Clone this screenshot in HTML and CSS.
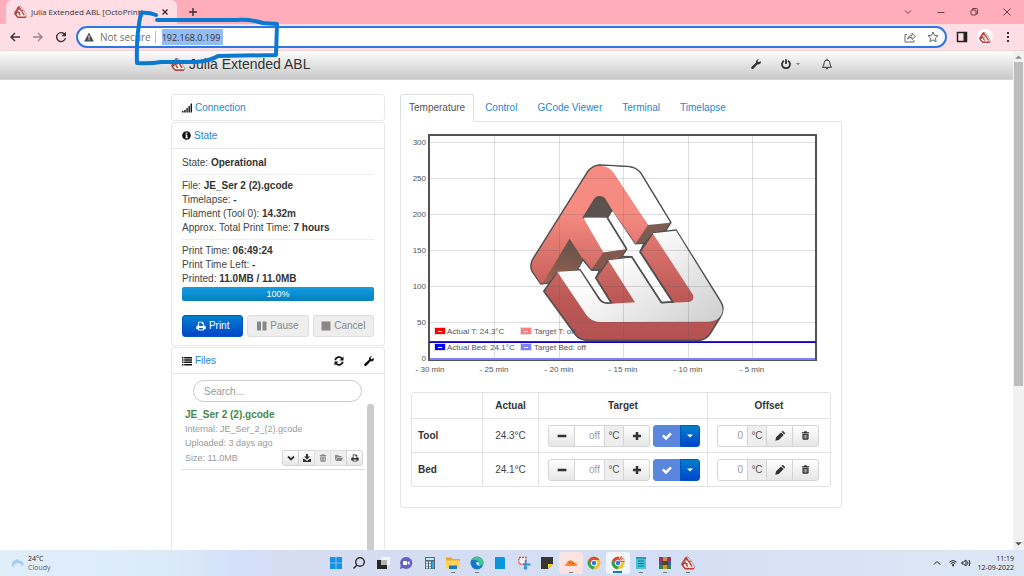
FILE: index.html
```html
<!DOCTYPE html>
<html lang="en">
<head>
<meta charset="utf-8">
<title>Julia Extended ABL [OctoPrint]</title>
<link rel="stylesheet" href="styles.css">
</head>
<body>
<svg class="sprite" aria-hidden="true">
  <defs>
    <linearGradient id="salmon" gradientUnits="userSpaceOnUse" x1="300" y1="60" x2="300" y2="416"><stop offset="0.4" stop-color="#f58b81"/><stop offset="1" stop-color="#c9615c"/></linearGradient>
    <linearGradient id="red" gradientUnits="userSpaceOnUse" x1="300" y1="264" x2="300" y2="585"><stop offset="0" stop-color="#e27870"/><stop offset="0.6" stop-color="#bc5957"/><stop offset="1" stop-color="#b45252"/></linearGradient>
    <linearGradient id="grey" gradientUnits="userSpaceOnUse" x1="440" y1="300" x2="620" y2="530"><stop offset="0" stop-color="#fbfbfb"/><stop offset="1" stop-color="#d2d2d2"/></linearGradient>
    <linearGradient id="brown" gradientUnits="userSpaceOnUse" x1="220" y1="281" x2="180" y2="416"><stop offset="0" stop-color="#615149"/><stop offset="1" stop-color="#98624f"/></linearGradient>
  </defs>
  <symbol id="logo" viewBox="88 54 586 536">
    <g stroke="#505050" stroke-width="5" stroke-linejoin="round">
      <path fill="#fff" d="M336 194L407 296L433 294L420 320L518 470L484 472L395 335L366 334L380 312L322 218Z"/>
      <path fill="#fff" d="M249 342L275 374L300 374L288 398L335 474L318 474Q302 470 296 458L240 374L230 376Z"/>
      <path fill="#fff" d="M300 60L385 65Q410 68 422 84L512 232L497 256L444 250Z"/>
      <path fill="url(#salmon)" d="M123 416L98 380Q88 362 99 342L262 82Q278 60 300 60L444 240L497 256L458 264L433 294L407 296L333 194L248 217L380 312L366 334L300 374L275 374L249 342L230 376L145 413Z"/>
      <path fill="url(#red)" d="M132 438L172 380L240 374L296 458Q305 474 322 474L335 474L288 398L325 345L395 335L484 472L518 470L420 320L458 264L528 255L660 466Q676 490 660 516L632 562Q618 585 595 585L265 585Q240 585 228 570Z"/>
    </g>
    <path fill="#fff" d="M300 62L385 67Q408 69 420 85L509 231L444 240L340 82Q325 62 300 62Z"/>
    <path fill="#fff" d="M250 218L322 218L378 312L310 322Z"/>
    <path fill="#fff" d="M338 198L405 298L430 297L418 320L514 468L486 470L397 333L369 333L383 312L325 218Z"/>
    <path fill="url(#salmon)" d="M123 414L100 380Q91 362 101 343L264 83Q280 62 300 62Q325 62 340 82L444 240L407 296L333 188L318 164Q312 153 299 153Q288 153 282 162L248 217L310 322L275 374L209 281L130 413Z"/>
    <path fill="#5c524d" d="M299 153Q312 153 318 164L336 194L322 218L248 217L282 162Q288 153 299 153Z"/>
    <path fill="#7c5c50" d="M444 240L510 233L496 254L458 263L433 293L407 295Z"/>
    <path fill="#83594d" d="M310 322L378 313L365 333L325 344L300 373L275 373Z"/>
    <path fill="url(#brown)" d="M209 281L249 342L230 375L172 379L145 412L128 415Z"/>
    <path fill="url(#grey)" d="M172 380L240 376L294 460Q303 476 322 476L405 471L325 345L395 337L483 474L565 470Q585 466 578 448L458 264L528 257L657 466Q678 498 655 519Q643 529 620 529L300 530Q275 530 260 510Z"/>
    <path fill="none" stroke="#505050" stroke-width="5" d="M322 218L380 312M484 472L395 335L366 334M484 472L518 470L420 320L433 294M336 194L322 218"/>
  </symbol>
  <symbol id="logo-mini" viewBox="88 54 586 536">
    <path fill="#fff" stroke="#7a4a48" stroke-width="24" d="M300 66L385 70L512 232L528 255L660 480L600 575L260 575L132 438L172 380L105 370Z"/>
    <path fill="#d2403a" d="M125 430L92 370L270 70L330 66L444 240L407 310L299 150L248 217L310 322L275 384L209 281Z"/>
    <path fill="#6a3530" d="M299 140L340 194L322 218L248 217ZM209 281L249 342L230 376L125 430ZM444 240L512 232L490 265L407 310ZM310 322L380 312L366 340L275 384Z"/>
    <path fill="#c83530" d="M132 438L172 380L270 520L660 520L610 588L250 588ZM325 345L405 470L335 478L280 398ZM458 264L585 465L518 475L420 320Z"/>
  </symbol>
  <symbol id="wrench" viewBox="0 0 16 16"><path d="M15.300 3.300L12.500 5 10.700 3.900V1.800L13.300.4C10.700-.4 8 1.500 8 4.300c0 .5.1 1 .2 1.400L1 12.500c-1 1-.9 2.200-.1 3s2 .7 2.900-.1L10.600 8.400c.4.1.9.2 1.300.2 2.700 0 4.700-2.600 3.400-5.300z"/></symbol>
  <symbol id="trash" viewBox="0 0 16 16"><path fill-rule="evenodd" d="M5 2L6 .5h4L11 2h3.500v2h-13V2zM2.500 5h11v9l-1.300 1.500H3.800L2.500 14zM5 6.500v7h1v-7zm2.500 0v7h1v-7zm2.500 0v7h1v-7z"/></symbol>
  <symbol id="print" viewBox="0 0 16 16"><path fill-rule="evenodd" d="M3.500 1h7l2 2v4h1q2 0 2 2v4h-3v2h-9v-2h-3V9q0-2 2-2h1zM5 2.500V8h6V4.500H9v-2zM5 11v2.500h6V11z"/></symbol>
  <symbol id="pencil" viewBox="0 0 16 16"><path d="M.5 15.500l1.200-5.500L9.500 2.200l4.300 4.300L6 14.300zM10.500 1.300L12 0h1l3 3v1l-1.300 1.500z"/></symbol>
  <symbol id="minus" viewBox="0 0 16 16"><path d="M1 6h14v4H1z"/></symbol>
  <symbol id="plus" viewBox="0 0 16 16"><path d="M6 1.500h4V6h4.500v4H10v4.500H6V10H1.500V6H6z"/></symbol>
  <symbol id="check" viewBox="0 0 16 16"><path d="M0 8.500L2.800 5.700l3.500 3.500 6.500-6.700L15.800 5.300 6.400 14.800z"/></symbol>
  <symbol id="caret" viewBox="0 0 16 16"><path d="M2 5h12l-6 6z"/></symbol>
</svg>

<header class="browser">
  <div class="tabstrip">
    <div class="tab">
      <svg class="tab-logo"><use href="#logo-mini"/></svg>
      <span class="tab-title">Julia Extended ABL [OctoPrint]</span>
      <button class="bare" aria-label="Close tab"><svg class="i8" viewBox="0 0 8 8"><path class="line bold" d="M1.500 1.500l5 5m0-5l-5 5"/></svg></button>
    </div>
    <button class="bare newtab" aria-label="New tab"><svg class="i10" viewBox="0 0 10 10"><path class="line bold" d="M5 1v8M1 5h8"/></svg></button>
    <div class="winbtns">
      <button class="bare" aria-label="Search tabs"><svg class="i10" viewBox="0 0 10 10"><path class="line" d="M2 3.500l3 3 3-3"/></svg></button>
      <button class="bare" aria-label="Minimize"><svg class="i10" viewBox="0 0 10 10"><path class="line" d="M1.500 5.500h7"/></svg></button>
      <button class="bare" aria-label="Restore"><svg class="i10" viewBox="0 0 10 10"><path class="line" d="M2 4q0-1 1-1h3q1 0 1 1v3q0 1-1 1H3q-1 0-1-1zM3.500 3V1.500H7.500q1 0 1 1V7H7"/></svg></button>
      <button class="bare" aria-label="Close"><svg class="i10" viewBox="0 0 10 10"><path class="line" d="M1.500 1.500l7 7m0-7l-7 7"/></svg></button>
    </div>
  </div>
  <div class="toolbar">
    <div class="history">
      <button class="bare" aria-label="Back"><svg class="i12" viewBox="0 0 12 12"><path class="line bold" d="M11 6H2M6 2L2 6l4 4"/></svg></button>
      <button class="bare faded" aria-label="Forward"><svg class="i12" viewBox="0 0 12 12"><path class="line bold" d="M1 6h9M6 2l4 4-4 4"/></svg></button>
      <button class="bare" aria-label="Reload"><svg class="i12" viewBox="0 0 12 12"><path class="line bold" d="M9.800 3.500A4.500 4.500 0 1 0 10.500 7.200"/><path d="M11 .8v4.400H6.600z"/></svg></button>
    </div>
    <div class="omnibox">
      <svg class="i10" viewBox="0 0 10 10"><path fill="#4c4c50" d="M5 .5L9.800 9.500H.2z"/><path fill="#fff" d="M4.500 3.500h1v3h-1zm0 3.800h1v1h-1z"/></svg>
      <span class="insecure">Not secure</span>
      <input class="url" aria-label="Address" value="192.168.0.199">
      <button class="bare share" aria-label="Share"><svg class="i12" viewBox="0 0 12 12"><path class="line" d="M3 3.500H1v7.500h9V9M3.500 8q.5-3.500 4.500-3.500V2.200L11.500 5.500 8 8.500V6.500Q5 6.300 3.500 8z"/></svg></button>
      <button class="bare" aria-label="Bookmark"><svg class="i12" viewBox="0 0 12 12"><path class="line" d="M6 1l1.500 3.300 3.500.4-2.600 2.400.7 3.600L6 8.900l-3.100 1.800.7-3.600L1 4.700l3.500-.4z"/></svg></button>
    </div>
    <button class="bare" aria-label="Side panel"><svg class="i12" viewBox="0 0 12 12"><path fill="none" stroke="#222" stroke-width="1.500" d="M1.500 1.500h9v9h-9z"/><path fill="#222" d="M7.500 1.500h3v9h-3z"/></svg></button>
    <button class="bare avatar" aria-label="Profile"><svg><use href="#logo-mini"/></svg></button>
    <button class="bare" aria-label="Menu"><svg class="i12" viewBox="0 0 12 12"><path d="M5 1h2v2H5zm0 4h2v2H5zm0 4h2v2H5z"/></svg></button>
  </div>
</header>

<div class="viewport">
  <div class="page">
    <nav class="navbar">
      <div class="wrap nav-inner">
        <a class="brand" href="#"><svg><use href="#logo-mini"/></svg>Julia Extended ABL</a>
        <a class="nav-icon" href="#" aria-label="Settings"><svg class="i10"><use href="#wrench"/></svg></a>
        <a class="nav-icon power" href="#" aria-label="System"><svg class="i10" viewBox="0 0 10 10"><path class="line heavy" d="M3 1.800a4 4 0 1 0 4 0M5 .3v4.700"/></svg><svg class="i6"><use href="#caret"/></svg></a>
        <a class="nav-icon" href="#" aria-label="Notifications"><svg class="i12" viewBox="0 0 12 12"><path class="line" d="M1.500 9.300Q3.200 7.500 3.200 4.500 3.500 2 6 2t2.800 2.500q0 3 1.700 4.800zM5 10.300q1 1.400 2 0M6 .8V2"/></svg></a>
      </div>
    </nav>

    <div class="wrap columns">
      <aside>
        <section class="box">
          <h2><svg class="i10" viewBox="0 0 10 10"><path d="M0 8h1.500v1.500H0zm2.200-1h1.500v2.500H2.200zm2.200-2h1.400v4.500H4.400zM6.500 3h1.400v6.500H6.500zM8.600.5H10v9H8.600z"/></svg><a href="#">Connection</a></h2>
        </section>
        <section class="box">
          <h2><svg class="i9" viewBox="0 0 9 9"><circle cx="4.500" cy="4.500" r="4.300"/><path fill="#fff" d="M3.700 1.400h1.700v1.400H3.700zM3.200 3.500h2.200v3H6v.8H3.200v-.8h.6V4.300h-.6z"/></svg><a href="#">State</a></h2>
          <div class="state">
            <p>State: <b>Operational</b></p>
            <hr>
            <p>File: <b>JE_Ser 2 (2).gcode</b></p>
            <p>Timelapse: <b>-</b></p>
            <p>Filament (Tool 0): <b>14.32m</b></p>
            <p>Approx. Total Print Time: <b>7 hours</b></p>
            <hr>
            <p>Print Time: <b>06:49:24</b></p>
            <p>Print Time Left: <b>-</b></p>
            <p>Printed: <b>11.0MB / 11.0MB</b></p>
            <div class="progress">100%</div>
            <div class="job">
              <button class="btn primary"><svg class="i10"><use href="#print"/></svg>Print</button>
              <button class="btn" disabled><svg class="i10" viewBox="0 0 10 10"><path d="M0 .5h4v9H0zm5.500 0h4v9h-4z"/></svg>Pause</button>
              <button class="btn" disabled><svg class="i10" viewBox="0 0 10 10"><path d="M.5.500h9v9h-9z"/></svg>Cancel</button>
            </div>
          </div>
        </section>
        <section class="box">
          <h2><svg class="i10" viewBox="0 0 10 10"><path d="M0 1h1.500v1.500H0zm2.200 0H10v1.500H2.200zM0 3.300h1.500v1.500H0zm2.200 0H10v1.500H2.200zM0 5.600h1.500v1.500H0zm2.200 0H10v1.500H2.200zM0 7.900h1.500v1.500H0zm2.200 0H10v1.500H2.200z"/></svg><a href="#">Files</a>
            <button class="bare refresh" aria-label="Refresh"><svg class="i10" viewBox="0 0 10 10"><path class="line heavy" d="M1.200 4.200A3.900 3.900 0 0 1 8 2.500M8.800 5.800A3.900 3.900 0 0 1 2 7.500"/><path d="M9.500.5v4h-4zM.5 9.500v-4h4z"/></svg></button>
            <button class="bare" aria-label="File settings"><svg class="i10"><use href="#wrench"/></svg></button>
          </h2>
          <div class="files">
            <input class="search" type="search" placeholder="Search..." aria-label="Search files">
            <div class="filelist">
              <div class="entries">
                <article class="entry">
                  <h3>JE_Ser 2 (2).gcode</h3>
                  <p>Internal: JE_Ser_2_(2).gcode</p>
                  <p>Uploaded: 3 days ago</p>
                  <div class="entry-foot">
                    <p>Size: 11.0MB</p>
                    <div class="group">
                      <button class="btn" aria-label="More"><svg class="i8" viewBox="0 0 8 8"><path class="line heavy" d="M1 2.500l3 3 3-3"/></svg></button>
                      <button class="btn" aria-label="Download"><svg class="i8" viewBox="0 0 8 8"><path d="M3 0h2v2.500h2L4 5.500 1 2.500h2zM0 5h1.500L4 7l2.500-2H8v3H0z"/></svg></button>
                      <button class="btn" disabled aria-label="Delete"><svg class="i8"><use href="#trash"/></svg></button>
                      <button class="btn" disabled aria-label="Load"><svg class="i8" viewBox="0 0 8 8"><path d="M0 1h3l1 1h2.500v1.200H2L0 6.500zM2.300 3.800H8L6.500 7H.5z"/></svg></button>
                      <button class="btn" aria-label="Print file"><svg class="i8"><use href="#print"/></svg></button>
                    </div>
                  </div>
                </article>
              </div>
              <div class="list-scroll"></div>
            </div>
          </div>
        </section>
      </aside>

      <main>
        <ul class="tabs">
          <li class="active"><a href="#">Temperature</a></li>
          <li><a href="#">Control</a></li>
          <li><a href="#">GCode Viewer</a></li>
          <li><a href="#">Terminal</a></li>
          <li><a href="#">Timelapse</a></li>
        </ul>
        <div class="pane">
          <svg class="chart" viewBox="0 0 420 245" role="img" aria-label="Temperature graph">
            <use href="#logo" x="118" y="31" width="196" height="179"/>
            <path stroke="#545454" stroke-opacity=".2" fill="none" d="M19 10.500H405M19 46.500H405M19 82.500H405M19 118.500H405M19 154.500H405M19 190.500H405M83.500 3V227M148.500 3V227M212.500 3V227M277.500 3V227M341.500 3V227"/>
            <g class="axis">
              <text x="15" y="13" text-anchor="end">300</text><text x="15" y="49" text-anchor="end">250</text><text x="15" y="85" text-anchor="end">200</text><text x="15" y="121" text-anchor="end">150</text><text x="15" y="157" text-anchor="end">100</text><text x="15" y="193" text-anchor="end">50</text><text x="15" y="229" text-anchor="end">0</text>
              <text x="19" y="240" text-anchor="middle">- 30 min</text><text x="83" y="240" text-anchor="middle">- 25 min</text><text x="148" y="240" text-anchor="middle">- 20 min</text><text x="212" y="240" text-anchor="middle">- 15 min</text><text x="277" y="240" text-anchor="middle">- 10 min</text><text x="341" y="240" text-anchor="middle">- 5 min</text>
              <text x="36" y="202">Actual T: 24.3°C</text><text x="123" y="202">Target T: off</text>
              <text x="36" y="218">Actual Bed: 24.1°C</text><text x="123" y="218">Target Bed: off</text>
            </g>
            <g stroke="#ddd">
              <path fill="#f00" d="M23.500 195.500h11v7h-11z"/><path fill="#ff8080" d="M109.500 195.500h11v7h-11z"/>
              <path fill="#00f" d="M23.500 211.500h11v7h-11z"/><path fill="#8080ff" d="M109.500 211.500h11v7h-11z"/>
              <path stroke="#fff" d="M27 199.500h4M113 199.500h4M27 215.500h4M113 215.500h4"/>
            </g>
            <path fill="none" stroke="#545454" stroke-width="2" d="M18 3H405V228H18z"/>
            <path stroke="#8080ff" stroke-width="2" d="M19 227H404"/>
            <path stroke="#b0003c" d="M18 209.500H405"/><path stroke="#1000c8" d="M18 210.500H405"/>
          </svg>
          <table>
            <colgroup><col class="c-name"><col class="c-actual"><col class="c-target"><col></colgroup>
            <thead><tr><th></th><th>Actual</th><th>Target</th><th>Offset</th></tr></thead>
            <tbody>
              <tr>
                <th>Tool</th><td class="actual">24.3°C</td>
                <td><div class="controls">
                  <div class="group"><button class="btn" aria-label="Decrease tool"><svg class="i10"><use href="#minus"/></svg></button><input placeholder="off" aria-label="Tool target"><span class="unit">°C</span><button class="btn" aria-label="Increase tool"><svg class="i10"><use href="#plus"/></svg></button></div>
                  <div class="group"><button class="btn primary set" aria-label="Set tool"><svg class="i10"><use href="#check"/></svg></button><button class="btn primary drop" aria-label="Tool presets"><svg class="i8"><use href="#caret"/></svg></button></div>
                </div></td>
                <td><div class="controls"><div class="group"><input placeholder="0" aria-label="Tool offset"><span class="unit">°C</span><button class="btn" aria-label="Edit tool offset"><svg class="i10"><use href="#pencil"/></svg></button><button class="btn" aria-label="Clear tool offset"><svg class="i9"><use href="#trash"/></svg></button></div></div></td>
              </tr>
              <tr>
                <th>Bed</th><td class="actual">24.1°C</td>
                <td><div class="controls">
                  <div class="group"><button class="btn" aria-label="Decrease bed"><svg class="i10"><use href="#minus"/></svg></button><input placeholder="off" aria-label="Bed target"><span class="unit">°C</span><button class="btn" aria-label="Increase bed"><svg class="i10"><use href="#plus"/></svg></button></div>
                  <div class="group"><button class="btn primary set" aria-label="Set bed"><svg class="i10"><use href="#check"/></svg></button><button class="btn primary drop" aria-label="Bed presets"><svg class="i8"><use href="#caret"/></svg></button></div>
                </div></td>
                <td><div class="controls"><div class="group"><input placeholder="0" aria-label="Bed offset"><span class="unit">°C</span><button class="btn" aria-label="Edit bed offset"><svg class="i10"><use href="#pencil"/></svg></button><button class="btn" aria-label="Clear bed offset"><svg class="i9"><use href="#trash"/></svg></button></div></div></td>
              </tr>
            </tbody>
          </table>
        </div>
      </main>
    </div>
  </div>
  <div class="scrollbar"><svg viewBox="0 0 10 10"><path fill="#8a8a8a" d="M2 7l3-3 3 3z"/></svg><div class="thumb"></div><svg viewBox="0 0 10 10"><path fill="#505050" d="M2 3l3 3 3-3z"/></svg></div>
</div>

<footer class="taskbar">
  <div class="weather">
    <svg viewBox="0 0 14 10"><path fill="#a9c8ee" d="M3 9a3 3 0 0 1 0-5 4 4 0 0 1 7-1 3 3 0 0 1 1 6z"/><path fill="#dceafa" d="M4 9a2 2 0 0 1 1-3 3 3 0 0 1 5 0 2 2 0 0 1 2 3z"/></svg>
    <div><p>24°C</p><p class="dim">Cloudy</p></div>
  </div>
  <div class="apps">
    <button class="bare" aria-label="Start"><svg viewBox="0 0 14 14"><path fill="#1592e6" d="M1 1h5.700v5.700H1zm6.300 0H13v5.700H7.300zM1 7.300h5.700V13H1zm6.300 0H13V13H7.300z"/></svg></button>
    <button class="bare" aria-label="Search"><svg viewBox="0 0 14 14"><circle cx="8" cy="6" r="4.300" fill="none" stroke="#333" stroke-width="1.500"/><path stroke="#333" stroke-width="1.600" d="M5 9L1.500 12.500"/></svg></button>
    <button class="bare" aria-label="Task view"><svg viewBox="0 0 14 14"><path fill="#272727" d="M1 4h10v9H1z"/><path fill="#f4f4f4" d="M5 1h9v8H5z"/><path fill="#b5b5b5" d="M5 4h6v5H5z"/></svg></button>
    <button class="bare" aria-label="Chat"><svg viewBox="0 0 14 14"><path fill="#6261c8" d="M7 1a6 6 0 1 1-3 11L1 13l.7-3.500A6 6 0 0 1 7 1z"/><path fill="#fff" d="M4 5h4v4H4zm4.500 1.500L10.500 5v4l-2-1.500z"/></svg></button>
    <button class="bare" aria-label="Calculator"><svg viewBox="0 0 14 14"><path fill="#586a7a" d="M2 1h10v12H2z"/><path fill="#c3e6f7" d="M3 2h8v2H3zM3 5.500h2v2H3zm3 0h2v2H6zM3 8h2v2H3zm3 0h2v2H6zm-3 2.500h2v2H3zm3 0h2v2H6z"/><path fill="#35a7df" d="M9 5.500h2v7H9z"/></svg></button>
    <button class="bare run" aria-label="Explorer"><svg viewBox="0 0 14 14"><path fill="#e8a820" d="M0 1.500h5.500l1 1.500H14V6H0z"/><path fill="#ffd35b" d="M0 4.500h14V12.500H0z"/><path fill="#1878c8" d="M3 9.500h8V13H3z"/></svg></button>
    <button class="bare run" aria-label="Edge"><svg viewBox="0 0 14 14"><circle cx="7" cy="7" r="6.500" fill="#1278c8"/><path fill="#42c88a" d="M1.500 4a6.500 6.500 0 0 1 12 4q-1 2-5 1.200Q10 6 7 4.500 4 3.500 1.500 4z"/><path fill="#dff4ff" d="M6 7q1-2 3 0-1 1.500 1 2.700-3 .8-4-2.700z"/></svg></button>
    <button class="bare" aria-label="Notebook"><svg viewBox="0 0 14 14"><path fill="#0a95dc" d="M2 1h9l1 1v11H2z"/></svg></button>
    <button class="bare" aria-label="Snip"><svg viewBox="0 0 14 14"><path fill="#fff" stroke="#d9482f" stroke-width="1.300" stroke-dasharray="2 1" d="M2 1.500h7v6.500H2z"/><path fill="none" stroke="#3290d4" stroke-width="1.800" d="M8.500 4v8M6 8.500h7.500"/><circle cx="8.500" cy="12" r="1.800" fill="#3290d4"/></svg></button>
    <button class="bare" aria-label="Sticky notes"><svg viewBox="0 0 14 14"><path fill="#363636" d="M1 1h12v7l-5 5H1z"/><path fill="#ffd22e" d="M8 13V8h5z"/></svg></button>
    <button class="bare run pink" aria-label="Slicer"><svg viewBox="0 0 14 14"><path fill="#f58a20" d="M0 9q3-1 4-4 4-2 7 2l3 2-3 1H3z"/><path fill="#c64e20" d="M5 6h2v1H5zm3 1h2v1H8z"/></svg></button>
    <button class="bare" aria-label="Chrome"><svg viewBox="0 0 14 14"><circle cx="7" cy="7" r="6.500" fill="#f6c425"/><path fill="#df4637" d="M1.400 4a6.500 6.500 0 0 1 11.200 0H7L4 8z"/><path fill="#30a352" d="M1.400 4L5 9l3 1-2 3.400A6.500 6.500 0 0 1 1.400 4z"/><circle cx="7" cy="7" r="2.800" fill="#3478df" stroke="#fff"/></svg></button>
    <button class="bare run current" aria-label="Chrome window"><svg viewBox="0 0 14 14"><circle cx="7" cy="7" r="6.500" fill="#f6c425"/><path fill="#df4637" d="M1.400 4a6.500 6.500 0 0 1 11.200 0H7L4 8z"/><path fill="#30a352" d="M1.400 4L5 9l3 1-2 3.400A6.500 6.500 0 0 1 1.400 4z"/><circle cx="7" cy="7" r="2.800" fill="#3478df" stroke="#fff"/><circle cx="11" cy="3" r="3" fill="#eee"/><use href="#logo-mini" x="8" y="0" width="6" height="6"/></svg></button>
    <button class="bare run" aria-label="Notepad"><svg viewBox="0 0 14 14"><path fill="#46c2d9" d="M2 1h10v12H2z"/><path stroke="#16738d" d="M2 2h10M4 5h6M4 7.500h6M4 10h6"/></svg></button>
    <button class="bare run" aria-label="WinRAR"><svg viewBox="0 0 14 14"><path fill="#9c3060" d="M1 1h12v4H1z"/><path fill="#315cb0" d="M1 5h12v4H1z"/><path fill="#368541" d="M1 9h12v4H1z"/><path fill="#c99638" d="M5 1h4v12H5z"/><path fill="#653d19" d="M4 5h6v4H4z"/></svg></button>
    <button class="bare run" aria-label="Julia"><svg><use href="#logo-mini"/></svg></button>
  </div>
  <div class="tray">
    <svg class="i8" viewBox="0 0 8 8"><path class="line" d="M1 5.500l3-3 3 3"/></svg>
    <svg class="i8 wifi" viewBox="0 0 8 8"><path class="line" d="M.5 3q3.500-3 7 0M1.700 4.500q2.300-2 4.600 0M3 6q1-1 2 0"/><circle cx="4" cy="6.800" r=".8"/></svg>
    <svg class="i10" viewBox="0 0 10 10"><path class="line" d="M1 4h1.500L5 2v6L2.500 6H1zM6.500 3.500q1 1.500 0 3M8 2q2 3 0 6"/></svg>
    <div class="clock"><p>11:19</p><p>12-09-2022</p></div>
  </div>
</footer>

<svg class="scribble" viewBox="0 0 150 60" aria-hidden="true"><path d="M26 9Q18 6 11 7Q6 30 7 57Q20 58 31 56L66 56Q80 55 88 50L146 49L147 18L133 17Q120 13 106 14L27 14"/></svg>
</body>
</html>
```
FILE: styles.css
```css
* { box-sizing: border-box; }
body {
  margin: 0;
  height: 100vh;
  display: flex;
  flex-direction: column;
  overflow: hidden;
  position: relative;
  background: #fff;
  color: #444;
  font: 10px/14px "Liberation Sans", Arial, sans-serif;
}
p, h2, h3, ul { margin: 0; padding: 0; }
b, th { color: #333; }
a { color: #1b87ce; text-decoration: none; }
svg { display: block; flex: none; fill: currentColor; }
button, input { font: inherit; color: inherit; }
.sprite { position: absolute; width: 0; height: 0; }
.i6 { width: 6px; height: 6px; }
.i8 { width: 8px; height: 8px; }
.i9 { width: 9px; height: 9px; }
.i10 { width: 10px; height: 10px; }
.i12 { width: 12px; height: 12px; }
.line { fill: none; stroke: currentColor; stroke-width: 1; }
.bold { stroke-width: 1.4; }
.heavy { stroke-width: 1.8; }
.bare { display: flex; align-items: center; justify-content: center; border: 0; padding: 0; background: none; }

/* Browser frame */
.browser { font-family: "Open Sans", "Noto Sans", sans-serif; color: #3a3032; }
.tabstrip { height: 24px; display: flex; align-items: center; padding-left: 6px; background: #ffacbb; }
.tab {
  width: 171px;
  height: 24px;
  display: flex;
  align-items: center;
  gap: 4px;
  padding: 0 8px;
  border-radius: 6px 6px 0 0;
  background: #ffdde4;
}
.tab-logo { width: 13px; height: 12px; }
.tab-title { flex: 1; font-size: 8px; white-space: nowrap; }
.newtab { margin-left: 11px; }
.winbtns { margin-left: auto; display: flex; gap: 23px; padding-right: 12px; color: #6a4048; }
.toolbar { height: 27px; display: flex; align-items: center; gap: 9px; padding: 0 10px 0 9px; background: #ffdde4; border-bottom: 1px solid #eed3d8; }
.history { display: flex; gap: 11px; }
.faded { opacity: .5; }
.omnibox {
  flex: 1;
  height: 22px;
  display: flex;
  align-items: center;
  gap: 6px;
  padding: 0 6px;
  border: 2px solid #2b78e4;
  border-radius: 11px;
  background: #fff;
}
.insecure { font-size: 10px; color: #707074; padding-right: 4px; line-height: 12px; border-right: 1px solid #bbb; }
.url { width: 61px; height: 16px; border: 0; padding: 0; font-size: 9px; background: #93bdf5; outline: 0; }
.share { margin-left: auto; margin-right: 5px; }
.omnibox .bare { color: #666; }
.avatar { width: 16px; height: 16px; border-radius: 8px; background: #fff; }
.avatar svg { width: 12px; height: 11px; }

/* Page area */
.viewport { flex: 1; min-height: 0; display: flex; }
.page { flex: 1; overflow: hidden; }
.scrollbar { width: 11px; display: flex; flex-direction: column; background: #f1f1f1; }
.scrollbar svg { height: 11px; }
.thumb { height: 65%; margin: 0 1px auto; background: #bdbdbd; }
.wrap { max-width: 671px; margin: 0 auto; }
.navbar { height: 29px; background: linear-gradient(#fdfdfd, #c9c9c9); border-bottom: 1px solid #d4d4d4; }
.nav-inner { height: 26px; display: flex; align-items: center; padding-right: 9px; }
.brand { display: flex; align-items: center; gap: 4px; margin-right: auto; font-size: 14px; color: #333; }
.brand svg { width: 14px; height: 13px; }
.nav-icon { display: flex; align-items: center; gap: 4px; color: #333; margin-left: 20px; }
.power .i6 { color: #888; }
.columns { display: grid; grid-template-columns: 214px 1fr; gap: 15px; padding-top: 14px; align-items: start; }

/* Sidebar */
.box { border: 1px solid #e8e8e8; border-radius: 3px; margin-bottom: 1px; }
h2 { height: 25px; display: flex; align-items: center; gap: 3px; padding: 0 10px; font-size: 10px; font-weight: normal; }
h2 svg { color: #111; }
.refresh { margin: 0 17px 0 auto; }
.state { border-top: 1px solid #e8e8e8; padding: 7px 10px 8px; }
hr { border: 0; border-top: 1px solid #eee; margin: 4px 0; }
.progress { height: 14px; border-radius: 2px; margin-top: 1px; background: linear-gradient(#149bdf, #0480be); color: #fff; font-size: 9px; text-align: center; }
.job { display: grid; grid-template-columns: 1fr 1fr 1fr; gap: 4px; margin-top: 14px; }
.btn {
  height: 22px;
  display: flex;
  align-items: center;
  justify-content: center;
  gap: 3px;
  padding: 0;
  border: 1px solid #d4d4d4;
  border-radius: 3px;
  background: linear-gradient(#fff, #e6e6e6);
  color: #333;
}
.btn:disabled { background: #eee; border-color: #ddd; color: #888; }
.btn.primary { background: linear-gradient(#0080cc, #0044cc); border-color: #0056c0; color: #fff; }
.files { border-top: 1px solid #e8e8e8; padding: 6px 10px 0 10px; }
.search {
  display: block;
  width: 169px;
  height: 22px;
  margin: 0 0 2px 11px;
  padding: 0 10px;
  border: 1px solid #ccc;
  border-radius: 11px;
  outline: 0;
}
::placeholder { color: #999; opacity: 1; }
.filelist { display: flex; gap: 2px; height: 240px; }
.entries { flex: 1; }
.list-scroll { width: 7px; border-radius: 3px; background: #ccc; }
.entry { padding: 4px 2px 3px 3px; border-bottom: 1px solid #ddd; font-size: 9px; color: #999; }
.entry h3 { font-size: 10px; color: #468847; }
.entry-foot { display: flex; justify-content: space-between; align-items: center; height: 16px; }
.entry .btn { width: 17px; height: 16px; }
.group { display: flex; }
.group > * { border-radius: 0; }
.group > * + * { margin-left: -1px; }
.group > :first-child { border-radius: 3px 0 0 3px; }
.group > :last-child { border-radius: 0 3px 3px 0; }

/* Main panel */
.tabs { display: flex; list-style: none; height: 27px; }
.tabs li { height: 28px; padding: 6px 9px; border: 1px solid transparent; }
.tabs .active { position: relative; padding: 6px 8px; margin-right: 1px; border-color: #ddd #ddd #fff; border-radius: 3px 3px 0 0; background: #fff; }
.active a { color: #555; }
.pane { border: 1px solid #e4e4e4; border-radius: 0 0 3px 3px; padding: 10px 10px 20px; }
.chart { width: 100%; margin-bottom: 15px; }
.axis { font-size: 8px; fill: #545454; }
table { width: 100%; table-layout: fixed; border: 1px solid #e2e2e2; border-radius: 3px; border-spacing: 0; }
.c-name { width: 70px; }
.c-actual { width: 56px; }
.c-target { width: 169px; }
th, td { height: 34px; padding: 0; border-top: 1px solid #e2e2e2; border-left: 1px solid #e2e2e2; text-align: center; }
thead th { height: 25px; border-top: 0; }
tr > :first-child { border-left: 0; }
tbody th { text-align: left; padding-left: 6px; }
.controls { display: flex; gap: 3px; padding-left: 9px; }
.controls .btn { width: 27px; }
.controls .drop { width: 20px; }
.controls .btn.set { width: 28px; background: #5b86de; border-color: #5b86de; }
.controls input { width: 31px; height: 22px; padding: 0 4px; border: 1px solid #d4d4d4; text-align: right; outline: 0; background: #fff; }
.unit { width: 20px; border: 1px solid #d4d4d4; background: #eee; line-height: 20px; text-align: center; color: #555; }

/* Taskbar */
.taskbar {
  height: 26px;
  display: grid;
  grid-template-columns: 1fr 376px 1fr;
  align-items: center;
  font: 7px/9px "Open Sans", "Noto Sans", sans-serif;
  color: #222;
  background: linear-gradient(90deg, #e0eef9, #dcebf9 16%, #d2dff8 24%, #d6dcf1 28%, #d3def5 60%, #dce7f6);
}
.weather { display: flex; align-items: center; gap: 4px; padding-left: 10px; }
.weather svg { width: 14px; height: 10px; }
.dim { color: #666; }
.apps { display: grid; grid-template-columns: repeat(16, 1fr); }
.apps .bare { height: 22px; border-bottom: 1px solid transparent; border-radius: 3px; }
.apps svg { width: 14px; height: 14px; }
.apps .run { background: linear-gradient(#777, #777) center bottom / 4px 1px no-repeat; }
.apps .pink { background-color: #fce3e3; }
.apps .current { background: linear-gradient(#0878d0, #0878d0) center bottom / 9px 2px no-repeat #f2f5fc; }
.tray { display: flex; align-items: center; justify-content: flex-end; gap: 4px; padding-right: 10px; }
.tray .i10 { margin-right: 2px; }
.tray .wifi { margin-left: 4px; }
.clock { text-align: right; }

/* Pen mark drawn over the address bar */
.scribble { position: absolute; left: 130px; top: 6px; width: 150px; height: 60px; pointer-events: none; }
.scribble path { fill: none; stroke: #0b79d0; stroke-width: 4; stroke-linecap: round; stroke-linejoin: round; }
```
